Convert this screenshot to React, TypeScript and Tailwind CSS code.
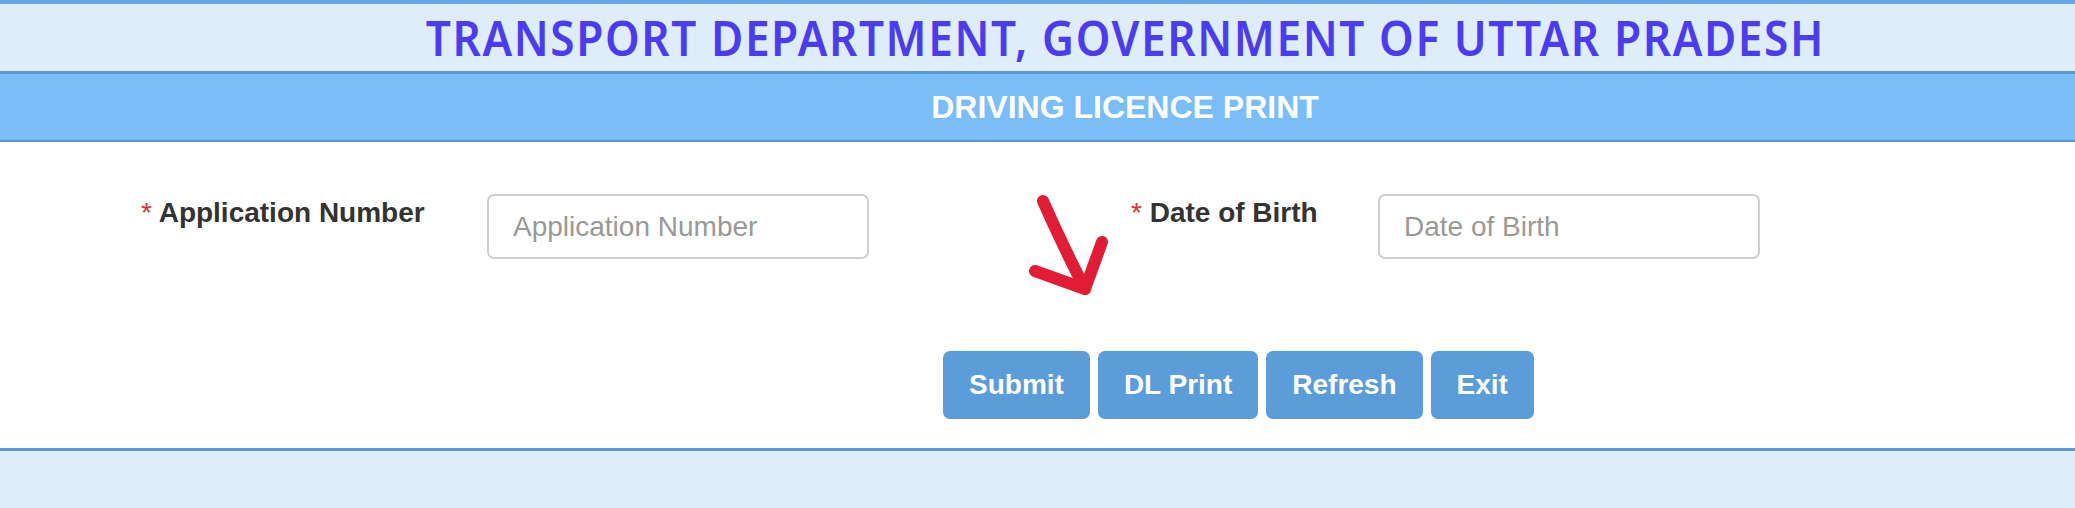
import React from "react";

// red hand-drawn arrow pointing at the DL Print button
function Arrow() {
  return (
    <svg
      className="absolute left-[1025px] top-[48px]"
      width="90"
      height="112"
      viewBox="0 0 90 112"
      fill="none"
    >
      <path
        d="M18 11 Q36 52 60 99"
        stroke="#e31c36"
        strokeWidth="12"
        strokeLinecap="round"
      />
      <path
        d="M10 81 L60 99 L77 52"
        stroke="#e31c36"
        strokeWidth="12"
        strokeLinecap="round"
        strokeLinejoin="round"
      />
    </svg>
  );
}

function Field({
  label,
  placeholder,
  labelWidth,
}: {
  label: string;
  placeholder: string;
  labelWidth: string;
}) {
  return (
    <div className="flex items-start">
      <label
        className={`${labelWidth} mt-[5px] text-[28px] leading-none font-bold text-[#333333]`}
      >
        <span className="font-normal text-[#d9342b]">*</span> {label}
      </label>
      <input
        type="text"
        placeholder={placeholder}
        className="w-[382px] h-[65px] rounded-[7px] border-2 border-[#cfcfcf] bg-white px-[24px] text-[28px] text-[#555] placeholder:text-[#999999] outline-none"
      />
    </div>
  );
}

export default function App() {
  const buttons = ["Submit", "DL Print", "Refresh", "Exit"];

  return (
    <div className="w-full min-h-[508px] bg-[#deedf7] font-['Liberation_Sans',Arial,sans-serif]">
      {/* TITLE */}
      <div className="h-[74px] border-t-4 border-t-[#62a8ea] border-b-[3px] border-b-[#5b9bd5] bg-[#deedf7] flex items-center pl-[175px]">
        <h1 className="w-full text-center text-[49px] leading-none font-semibold text-[#4b3bf3] font-['Noto_Sans',sans-serif]">
          <span className="inline-block scale-x-[0.9] tracking-[1.8px]">
            TRANSPORT DEPARTMENT, GOVERNMENT OF UTTAR PRADESH
          </span>
        </h1>
      </div>

      {/* SUB TITLE */}
      <div className="h-[68px] border-b-2 border-b-[#5b92cf] bg-[#79bef8] flex items-center pl-[175px]">
        <h2 className="w-full text-center text-[32px] leading-none font-bold text-white">
          DRIVING LICENCE PRINT
        </h2>
      </div>

      {/* FORM */}
      <div className="relative bg-white border-b-[3px] border-b-[#5b9bd5] pt-[52px] pb-[29px]">
        <div className="flex pl-[141px]">
          <Field
            label="Application Number"
            placeholder="Application Number"
            labelWidth="w-[346px]"
          />
          <div className="w-[262px]" />
          <Field
            label="Date of Birth"
            placeholder="Date of Birth"
            labelWidth="w-[247px]"
          />
        </div>

        <div className="mt-[92px] flex gap-[8px] pl-[943px]">
          {buttons.map((b) => (
            <button
              key={b}
              className="h-[68px] rounded-[7px] bg-[#5b9dd8] px-[26px] text-[28px] font-bold text-white"
            >
              {b}
            </button>
          ))}
        </div>

        <Arrow />
      </div>

      {/* FOOTER */}
      <div className="h-[56px] bg-[#deedf7]" />
    </div>
  );
}
